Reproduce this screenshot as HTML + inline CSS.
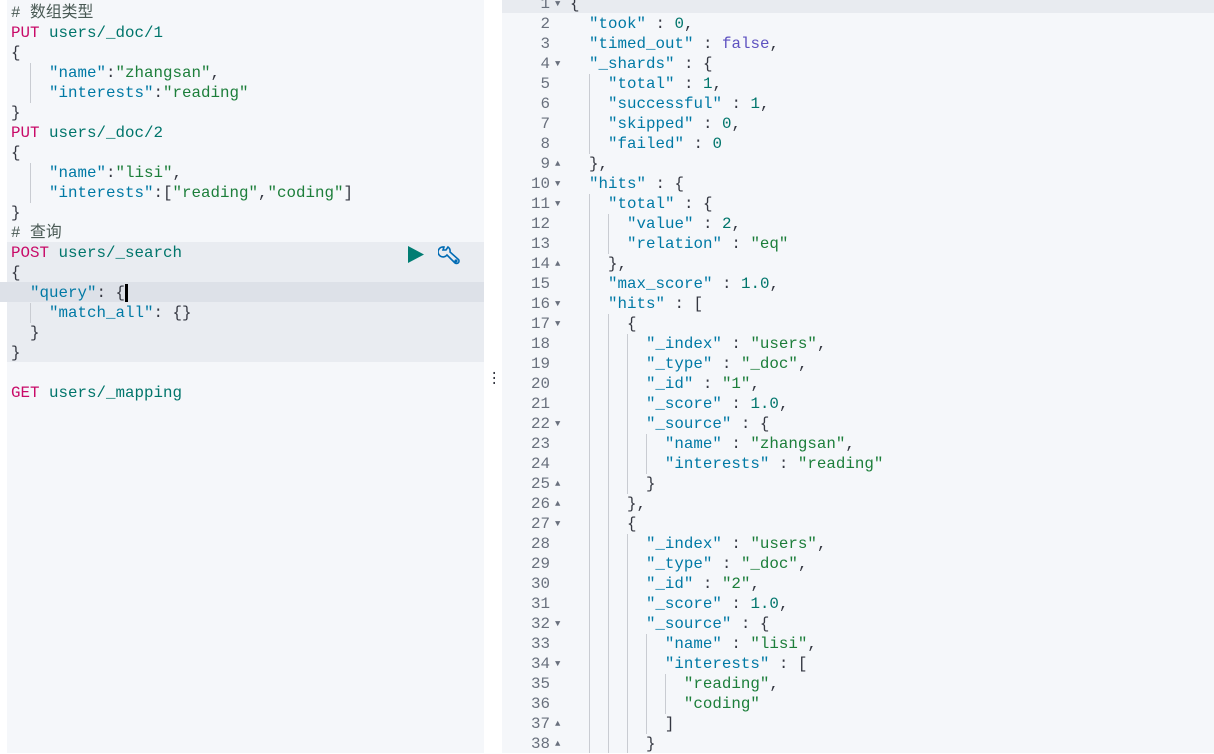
<!DOCTYPE html>
<html><head><meta charset="utf-8"><style>
html,body{margin:0;padding:0;width:1214px;height:753px;overflow:hidden;background:#fff;}
body{font-family:"Liberation Mono","Noto Sans CJK SC",monospace;font-size:15.83px;}
.pane{position:absolute;top:0;height:753px;background:#f5f7fa;overflow:hidden;}
.ln{position:absolute;left:0;height:20px;line-height:20px;white-space:pre;}
.c{color:#4a5a55}.m{color:#c80a68}.u{color:#00756b}.k{color:#0079a5}.s{color:#1c7e3a}.n{color:#00756b}.b{color:#5e52c0}.p{color:#343741}
.g{display:inline-block;width:2ch;height:20px;vertical-align:top;}
.gl{display:inline-block;width:2ch;height:20px;vertical-align:top;box-shadow:inset 1px 0 0 #c9ccd2;}
.num{position:absolute;left:0;width:48px;text-align:right;color:#69707d;height:20px;line-height:20px;}
.fa{position:absolute;left:53px;color:#69707d;font-size:9px;line-height:20px;}
</style></head><body>
<div class="pane" style="left:7px;width:477px;">
  <div style="position:absolute;left:0;top:242px;width:477px;height:120px;background:#e9ecf1"></div>
  <div style="position:absolute;left:-7px;top:282px;width:484px;height:20px;background:#dde1e8"></div>
</div>
<div style="position:absolute;left:0;top:282px;width:7px;height:20px;background:#dde1e8"></div>
<div style="position:absolute;left:0;top:1px;width:484px;height:753px;">
<div class="ln" style="top:2px;left:11px"><span class="c"># 数组类型</span></div>
<div class="ln" style="top:22px;left:11px"><span class="m">PUT</span> <span class="u">users/_doc/1</span></div>
<div class="ln" style="top:42px;left:11px"><span class="p">{</span></div>
<div class="ln" style="top:62px;left:11px"><span class="g"></span><span class="gl"></span><span class="k">"name"</span><span class="p">:</span><span class="s">"zhangsan"</span><span class="p">,</span></div>
<div class="ln" style="top:82px;left:11px"><span class="g"></span><span class="gl"></span><span class="k">"interests"</span><span class="p">:</span><span class="s">"reading"</span></div>
<div class="ln" style="top:102px;left:11px"><span class="p">}</span></div>
<div class="ln" style="top:122px;left:11px"><span class="m">PUT</span> <span class="u">users/_doc/2</span></div>
<div class="ln" style="top:142px;left:11px"><span class="p">{</span></div>
<div class="ln" style="top:162px;left:11px"><span class="g"></span><span class="gl"></span><span class="k">"name"</span><span class="p">:</span><span class="s">"lisi"</span><span class="p">,</span></div>
<div class="ln" style="top:182px;left:11px"><span class="g"></span><span class="gl"></span><span class="k">"interests"</span><span class="p">:[</span><span class="s">"reading"</span><span class="p">,</span><span class="s">"coding"</span><span class="p">]</span></div>
<div class="ln" style="top:202px;left:11px"><span class="p">}</span></div>
<div class="ln" style="top:222px;left:11px"><span class="c"># 查询</span></div>
<div class="ln" style="top:242px;left:11px"><span class="m">POST</span> <span class="u">users/_search</span></div>
<div class="ln" style="top:262px;left:11px"><span class="p">{</span></div>
<div class="ln" style="top:282px;left:11px"><span class="g"></span><span class="k">"query"</span><span class="p">: {</span><span style="display:inline-block;width:3px;height:18px;background:#000;vertical-align:top;margin-top:1px"></span></div>
<div class="ln" style="top:302px;left:11px"><span class="g"></span><span class="gl"></span><span class="k">"match_all"</span><span class="p">: {}</span></div>
<div class="ln" style="top:322px;left:11px"><span class="g"></span><span class="p">}</span></div>
<div class="ln" style="top:342px;left:11px"><span class="p">}</span></div>
<div class="ln" style="top:382px;left:11px"><span class="m">GET</span> <span class="u">users/_mapping</span></div>
<svg style="position:absolute;left:406px;top:244px" width="20" height="20"><polygon points="2,1 18,9.5 2,18" fill="#017d73"/></svg>
<svg style="position:absolute;left:438px;top:244px" width="24" height="22" fill="none" stroke="#006bb4" stroke-width="1.6"><path d="M6 2 A5 5 0 1 0 9 10 L17 18 A2.5 2.5 0 0 0 20.5 14.5 L12 7 A5 5 0 0 0 10 2 L8 5 L5 5 Z"/><circle cx="18" cy="16" r="0.8" fill="#006bb4"/></svg>
</div>
<div style="position:absolute;left:490px;top:372px;color:#343741;font-size:14px;line-height:5px;">·<br>·<br>·</div>
<div class="pane" style="left:502px;width:712px;">
<div style="position:absolute;left:0;top:0;width:712px;height:13px;background:#e8ebf0"></div>
<div id="r" style="position:absolute;left:0;top:-6px;width:712px;"></div>
</div>
<script>
var L=[
[0,'<span class="p">{</span>','d'],
[1,'<span class="k">"took"</span><span class="p"> : </span><span class="n">0</span><span class="p">,</span>'],
[1,'<span class="k">"timed_out"</span><span class="p"> : </span><span class="b">false</span><span class="p">,</span>'],
[1,'<span class="k">"_shards"</span><span class="p"> : {</span>','d'],
[2,'<span class="k">"total"</span><span class="p"> : </span><span class="n">1</span><span class="p">,</span>'],
[2,'<span class="k">"successful"</span><span class="p"> : </span><span class="n">1</span><span class="p">,</span>'],
[2,'<span class="k">"skipped"</span><span class="p"> : </span><span class="n">0</span><span class="p">,</span>'],
[2,'<span class="k">"failed"</span><span class="p"> : </span><span class="n">0</span>'],
[1,'<span class="p">},</span>','u'],
[1,'<span class="k">"hits"</span><span class="p"> : {</span>','d'],
[2,'<span class="k">"total"</span><span class="p"> : {</span>','d'],
[3,'<span class="k">"value"</span><span class="p"> : </span><span class="n">2</span><span class="p">,</span>'],
[3,'<span class="k">"relation"</span><span class="p"> : </span><span class="s">"eq"</span>'],
[2,'<span class="p">},</span>','u'],
[2,'<span class="k">"max_score"</span><span class="p"> : </span><span class="n">1.0</span><span class="p">,</span>'],
[2,'<span class="k">"hits"</span><span class="p"> : [</span>','d'],
[3,'<span class="p">{</span>','d'],
[4,'<span class="k">"_index"</span><span class="p"> : </span><span class="s">"users"</span><span class="p">,</span>'],
[4,'<span class="k">"_type"</span><span class="p"> : </span><span class="s">"_doc"</span><span class="p">,</span>'],
[4,'<span class="k">"_id"</span><span class="p"> : </span><span class="s">"1"</span><span class="p">,</span>'],
[4,'<span class="k">"_score"</span><span class="p"> : </span><span class="n">1.0</span><span class="p">,</span>'],
[4,'<span class="k">"_source"</span><span class="p"> : {</span>','d'],
[5,'<span class="k">"name"</span><span class="p"> : </span><span class="s">"zhangsan"</span><span class="p">,</span>'],
[5,'<span class="k">"interests"</span><span class="p"> : </span><span class="s">"reading"</span>'],
[4,'<span class="p">}</span>','u'],
[3,'<span class="p">},</span>','u'],
[3,'<span class="p">{</span>','d'],
[4,'<span class="k">"_index"</span><span class="p"> : </span><span class="s">"users"</span><span class="p">,</span>'],
[4,'<span class="k">"_type"</span><span class="p"> : </span><span class="s">"_doc"</span><span class="p">,</span>'],
[4,'<span class="k">"_id"</span><span class="p"> : </span><span class="s">"2"</span><span class="p">,</span>'],
[4,'<span class="k">"_score"</span><span class="p"> : </span><span class="n">1.0</span><span class="p">,</span>'],
[4,'<span class="k">"_source"</span><span class="p"> : {</span>','d'],
[5,'<span class="k">"name"</span><span class="p"> : </span><span class="s">"lisi"</span><span class="p">,</span>'],
[5,'<span class="k">"interests"</span><span class="p"> : [</span>','d'],
[6,'<span class="s">"reading"</span><span class="p">,</span>'],
[6,'<span class="s">"coding"</span>'],
[5,'<span class="p">]</span>','u'],
[4,'<span class="p">}</span>','u']
];
var h='';
for(var i=0;i<L.length;i++){var t=i*20;var l=L[i];
h+='<div class="num" style="top:'+t+'px">'+(i+1)+'</div>';
if(l[2])h+='<div class="fa" style="top:'+t+'px">'+(l[2]=='d'?'▼':'▲')+'</div>';
var s='';for(var j=0;j<l[0];j++)s+=(j==0?'<span class="g"></span>':'<span class="gl"></span>');
h+='<div class="ln" style="top:'+t+'px;left:68px">'+s+l[1]+'</div>';}
document.getElementById('r').innerHTML=h;
</script>
</body></html>
